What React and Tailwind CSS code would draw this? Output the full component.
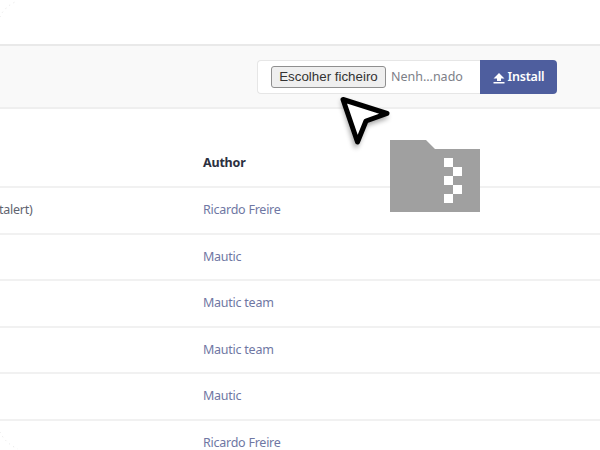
const rows = [
  { name: "talert)", author: "Ricardo Freire" },
  { name: "", author: "Mautic" },
  { name: "", author: "Mautic team" },
  { name: "", author: "Mautic team" },
  { name: "", author: "Mautic" },
  { name: "", author: "Ricardo Freire" },
];

function Cursor() {
  return (
    <svg className="absolute left-[335px] top-[90px]" width="64" height="64" viewBox="0 0 64 64" fill="none">
      <defs>
        <filter id="s" x="-30%" y="-30%" width="160%" height="160%">
          <feGaussianBlur stdDeviation="2.5" />
        </filter>
      </defs>
      <path d="M8 12 L51 27 L30 34 L21 56 Z" fill="#000" opacity="0.35" stroke="#000" strokeWidth="4" strokeLinejoin="round" filter="url(#s)" />
      <path d="M8 9.5 L52 23.5 L31 31 L22.5 52 Z" fill="#fff" stroke="#000" strokeWidth="5" strokeLinejoin="round" />
    </svg>
  );
}

function Folder() {
  return (
    <svg className="absolute left-[390px] top-[140px]" width="90" height="72" viewBox="0 0 90 72" shapeRendering="crispEdges">
      <path d="M0 0 H36 L45 9 H90 V72 H0 Z" fill="#a0a0a0" shapeRendering="auto" />
      <rect x="54" y="18" width="9" height="9" fill="#fff" />
      <rect x="63" y="27" width="9" height="9" fill="#fff" />
      <rect x="54" y="36" width="9" height="9" fill="#fff" />
      <rect x="63" y="45" width="9" height="9" fill="#fff" />
      <rect x="54" y="54" width="9" height="9" fill="#fff" />
    </svg>
  );
}

function Arcs() {
  return (
    <svg className="absolute left-0 top-0" width="600" height="450" viewBox="0 0 600 450" fill="none">
      <path d="M0 17 Q4 7 17 1" stroke="#e4e4e4" strokeWidth="1" strokeDasharray="1 4" />
      <path d="M0 432 Q5 443 18 449" stroke="#e4e4e4" strokeWidth="1" strokeDasharray="1 4" />
    </svg>
  );
}

export default function App() {
  return (
    <div className="relative w-[600px] h-[450px] overflow-hidden bg-white font-['Noto_Sans',sans-serif]">
      <div className="h-[46px] border-b-2 border-[#e9e9e9] bg-white" />
      <div className="h-[63px] border-b-2 border-[#efefef] bg-[#f9f9f9] flex justify-end items-start pt-[14px] pr-[43px]">
        <div className="flex h-[34px] w-[300px]">
          <div className="w-[223px] h-full bg-white border border-[#e6e6e6] border-r-0 rounded-l-[4px] flex items-center pl-[13px]">
            <div className="w-[115px] h-[22px] bg-[#efefef] border border-[#8f8f8f] rounded-[3px] flex items-center justify-center font-['Liberation_Sans',sans-serif] text-[13.33px] text-[#333333] whitespace-nowrap">
              Escolher ficheiro
            </div>
            <span className="ml-[5px] text-[12.5px] text-[#7d8088] whitespace-nowrap">Nenh…nado</span>
          </div>
          <div className="w-[77px] h-full bg-[#4e5e9e] rounded-r-[4px] flex items-center justify-center gap-[3px] text-white text-[12.5px] font-semibold tracking-[-0.2px]">
            <svg className="mt-[2px]" width="12" height="12" viewBox="0 0 12 12" fill="#fff">
              <path d="M6 1 L11.5 6.5 H8 V9 H4 V6.5 H0.5 Z" />
              <rect x="0.5" y="10" width="11" height="1.5" />
            </svg>
            <span>Install</span>
          </div>
        </div>
      </div>
      <div className="h-[77px] flex items-center pl-[203px] pt-[32px] text-[12.5px] font-bold tracking-[-0.2px] text-[#2c3040]">Author</div>
      {rows.map((r, i) => (
        <div key={i} className="h-[46.5px] border-t-2 border-[#f1f1f1] flex items-center pt-[1px] tracking-[-0.25px]">
          <div className="w-[203px] text-[12.5px] text-[#5f6470] -ml-[1px]">{r.name}</div>
          <div className="text-[12.5px] text-[#6f77a3] ml-[1px]">{r.author}</div>
        </div>
      ))}
      <Arcs />
      <Cursor />
      <Folder />
    </div>
  );
}
